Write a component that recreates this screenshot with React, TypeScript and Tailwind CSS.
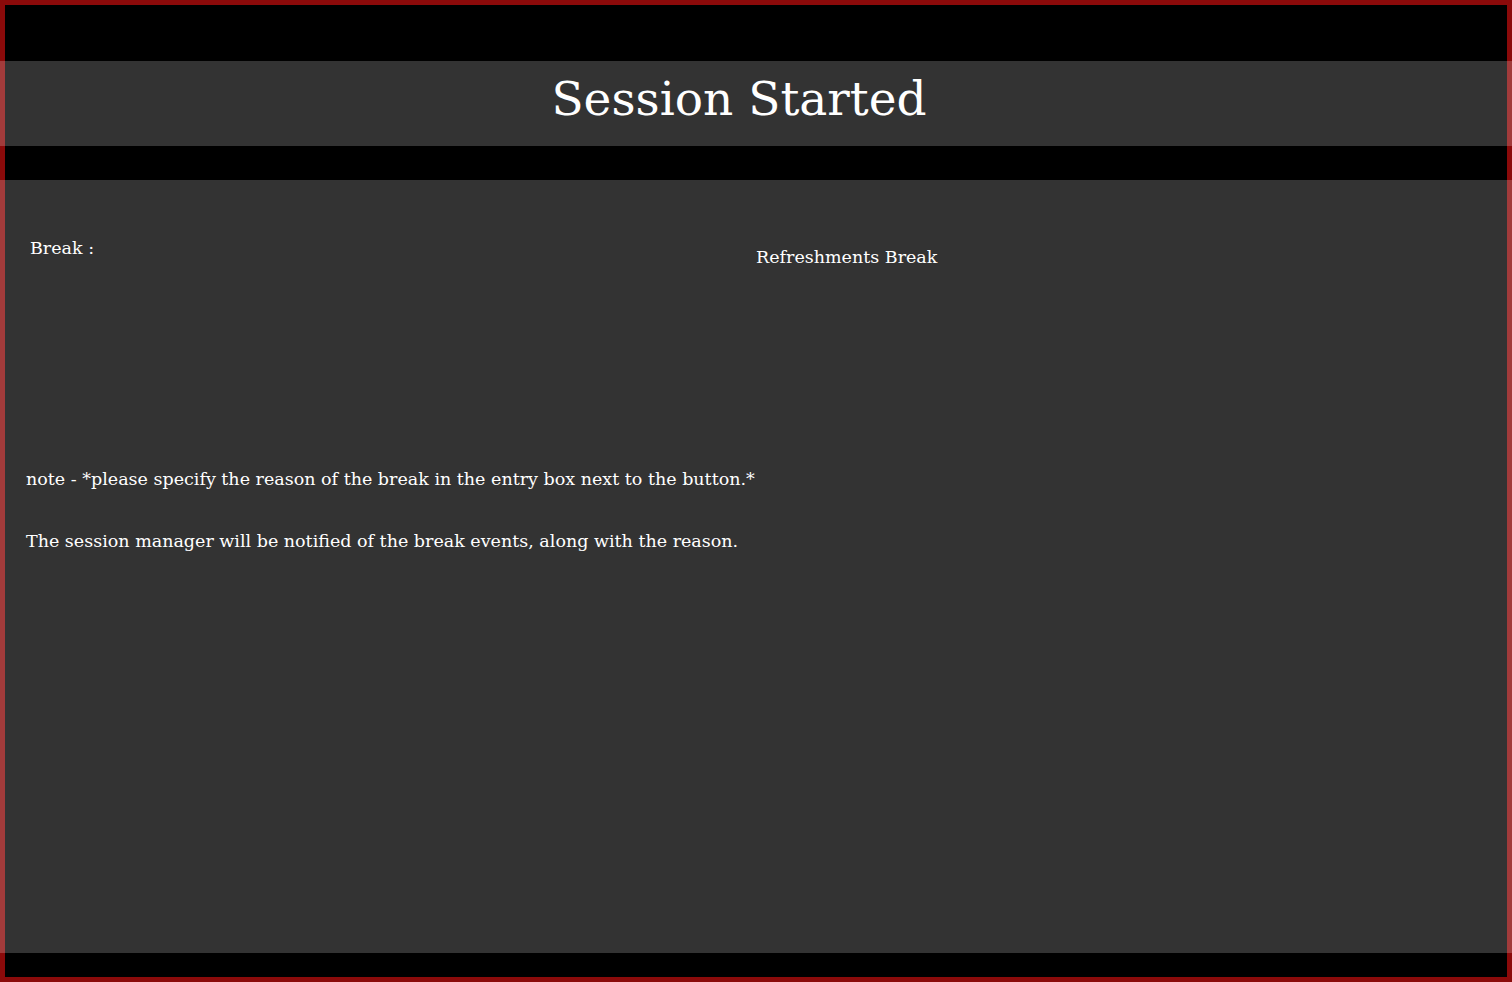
export default function App() {
  const font = { fontFamily: '"DejaVu Serif", serif' };
  return (
    <div
      className="flex h-[982px] w-[1512px] flex-col border-[5px] border-[#8b0a0a] bg-black text-white"
      style={font}
    >
      <div className="h-[56px] shrink-0" />
      <header className="-mx-[5px] flex h-[85px] shrink-0 items-center justify-center bg-white/20 pb-[10px] pr-[34px]">
        <h1 className="text-[47px] leading-none">Session Started</h1>
      </header>
      <div className="h-[34px] shrink-0" />
      <main className="-mx-[5px] flex flex-1 flex-col bg-white/20 px-[26px]">
        <div className="grid grid-cols-2 pt-[55px]">
          <div className="pl-[4px] text-[17.5px]">Break :</div>
          <div className="pt-[9px] text-[17.5px]">Refreshments Break</div>
        </div>
        <p className="mt-[196px] text-[17.5px]">
          note - *please specify the reason of the break in the entry box next to the button.*
        </p>
        <p className="mt-[35px] text-[17.5px]">
          The session manager will be notified of the break events, along with the reason.
        </p>
      </main>
      <div className="h-[24px] shrink-0" />
    </div>
  );
}
